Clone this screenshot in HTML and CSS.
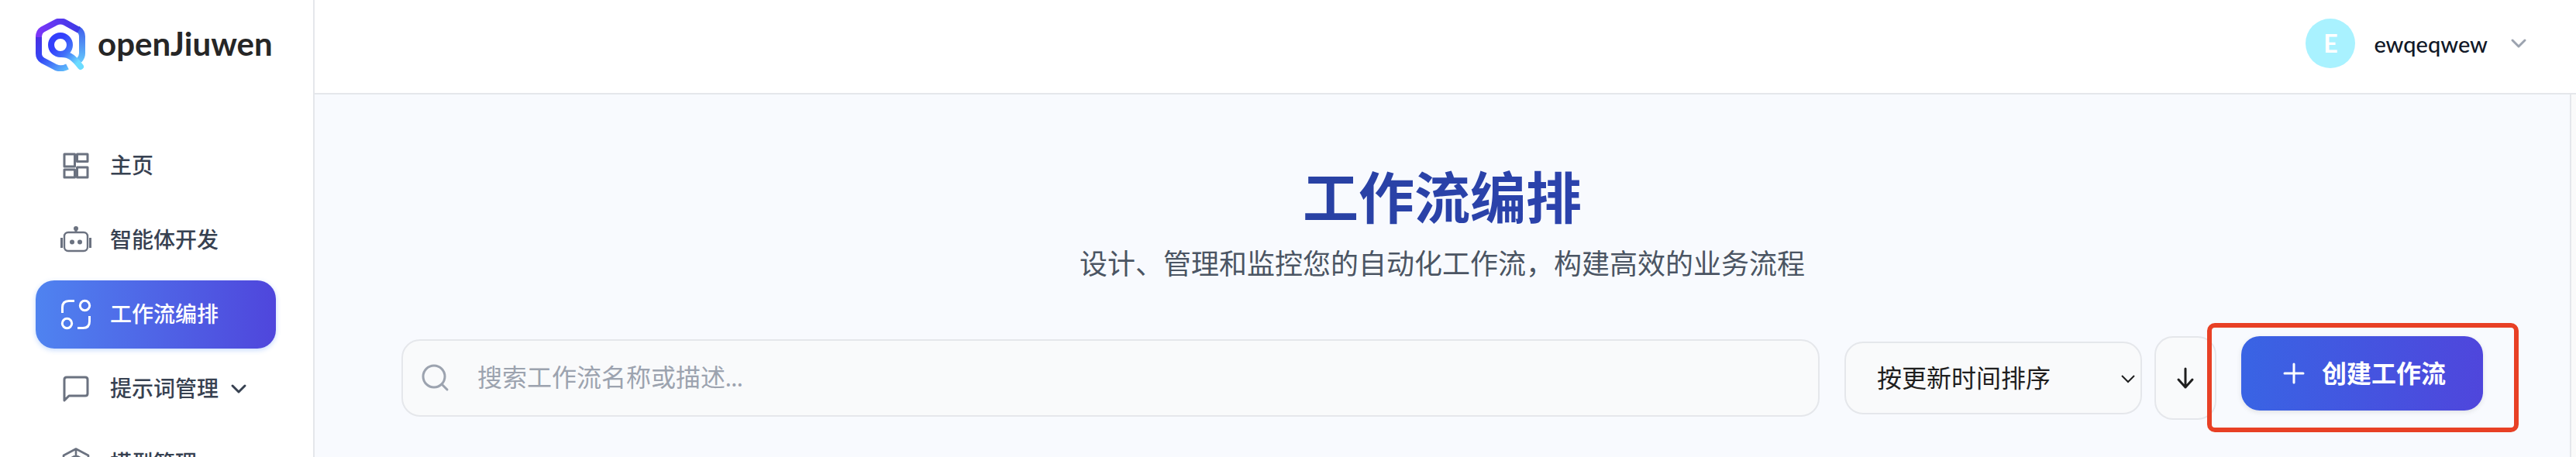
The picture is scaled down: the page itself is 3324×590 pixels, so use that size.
FILE: index.html
```html
<!DOCTYPE html>
<html lang="zh-CN">
<head>
  <meta charset="UTF-8" />
  <meta name="viewport" content="width=device-width, initial-scale=1.0"/>
  <title>工作流编排 - openJiuwen</title>
  <link rel="stylesheet" href="styles.css">
</head>
<body>
  <aside class="sidebar">
    <a class="brand" href="#">
      <svg class="brand-logo" viewBox="0 0 64 68" fill="none" stroke-width="8">
        <defs>
          <linearGradient id="logoTop" x1="4" y1="20" x2="56" y2="10" gradientUnits="userSpaceOnUse">
            <stop offset="0" stop-color="#7b35f8"/><stop offset="1" stop-color="#3c3ae6"/>
          </linearGradient>
          <linearGradient id="logoLeft" x1="4" y1="22" x2="40" y2="66" gradientUnits="userSpaceOnUse">
            <stop offset="0" stop-color="#4a2fe2"/><stop offset="0.45" stop-color="#3348f6"/><stop offset="1" stop-color="#5fbcfb"/>
          </linearGradient>
          <linearGradient id="logoRight" x1="58" y1="12" x2="60" y2="54" gradientUnits="userSpaceOnUse">
            <stop offset="0" stop-color="#3f5fec"/><stop offset="1" stop-color="#62c2fb"/>
          </linearGradient>
          <linearGradient id="logoTail" x1="26" y1="34" x2="58" y2="62" gradientUnits="userSpaceOnUse">
            <stop offset="0" stop-color="#333ffc"/><stop offset="0.4" stop-color="#4272f8"/><stop offset="0.85" stop-color="#6bdcff"/>
          </linearGradient>
        </defs>
        <path stroke="url(#logoLeft)" d="M4 22V45Q4 51 9 54L26 63Q33 66 41 62"/>
        <path stroke="url(#logoRight)" d="M54 13Q60 17 60 23V45Q60 50 56 54"/>
        <path stroke="url(#logoTop)" d="M4 24Q4 17 9 14L26 5Q32 2 38 5L56 15"/>
        <circle cx="32" cy="34" r="12" stroke="url(#logoTail)"/>
        <path stroke="url(#logoTail)" stroke-linecap="round" d="M33 46C45 46 50 52 58 62"/>
      </svg>
      <span class="brand-name">openJiuwen</span>
    </a>

    <nav class="menu">
      <a class="menu-item" href="#">
        <svg class="menu-icon" viewBox="0 0 40 40" fill="none" stroke="currentColor" stroke-width="3" stroke-linejoin="round">
          <path d="M5 5H18.500V21H5zM21.500 5H35V14.500H21.500zM5 25H18.500V35H5zM21.500 22H35V35H21.500z"/>
        </svg>
        <span class="menu-text">主页</span>
      </a>
      <a class="menu-item" href="#">
        <svg class="menu-icon" viewBox="0 0 40 40" fill="none" stroke="currentColor" stroke-width="2.400">
          <rect x="5" y="10" width="30" height="24" rx="5"/>
          <path d="M20 5V10M1.500 17V30M38.500 17V30" stroke-width="3"/>
          <g fill="currentColor" stroke="none">
            <circle cx="20" cy="5" r="3"/><circle cx="15" cy="22.500" r="3"/><circle cx="25" cy="22.500" r="3"/>
          </g>
        </svg>
        <span class="menu-text">智能体开发</span>
      </a>
      <a class="menu-item active" href="#">
        <svg class="menu-icon" viewBox="0 0 40 40" fill="none" stroke="currentColor" stroke-width="3">
          <path d="M2.500 18V11Q2.500 2.500 11 2.500H18M22 37.500H29Q37.500 37.500 37.500 29V22"/>
          <circle cx="31.500" cy="8.500" r="6.200"/><circle cx="8.500" cy="31.500" r="6.200"/>
        </svg>
        <span class="menu-text">工作流编排</span>
      </a>
      <button class="menu-item" type="button">
        <svg class="menu-icon" viewBox="0 0 40 40" fill="none" stroke="currentColor" stroke-width="3" stroke-linejoin="round">
          <path d="M5 35V8Q5 5 8 5H32Q35 5 35 8V26Q35 29 32 29H11Z"/>
        </svg>
        <span class="menu-text">提示词管理</span>
        <svg class="menu-arrow" viewBox="0 0 24 24" fill="none" stroke="currentColor" stroke-width="3" stroke-linecap="round" stroke-linejoin="round">
          <path d="M4 8L12 16L20 8"/>
        </svg>
      </button>
      <a class="menu-item" href="#">
        <svg class="menu-icon" viewBox="0 0 40 40" fill="none" stroke="currentColor" stroke-width="2.600" stroke-linejoin="round">
          <path d="M20 1.500L36 10V30L20 38.500L4 30V10Z"/>
          <path d="M20 2V10M20 10L29 15V25L20 30L11 25V15ZM11 15L20 20L29 15M20 20V30M4 30L11 25M36 30L29 25"/>
        </svg>
        <span class="menu-text">模型管理</span>
      </a>
    </nav>
  </aside>

  <div class="page">
    <header class="topbar">
      <button class="user" type="button">
        <span class="avatar">E</span>
        <span class="user-name">ewqeqwew</span>
        <svg class="user-arrow" viewBox="0 0 32 32" fill="none" stroke="currentColor" stroke-width="3" stroke-linecap="round" stroke-linejoin="round">
          <path d="M8 12L16 20L24 12"/>
        </svg>
      </button>
    </header>

    <main class="content">
      <h1 class="title">工作流编排</h1>
      <p class="subtitle">设计、管理和监控您的自动化工作流，构建高效的业务流程</p>

      <div class="toolbar">
        <label class="search">
          <svg class="search-icon" viewBox="0 0 40 40" fill="none" stroke="currentColor" stroke-width="3" stroke-linecap="round">
            <circle cx="18" cy="18" r="14"/><path d="M28 28L35 35"/>
          </svg>
          <input class="search-input" type="text" placeholder="搜索工作流名称或描述..." aria-label="搜索工作流">
        </label>
        <div class="sort">
          <select class="sort-select" aria-label="排序方式">
            <option>按更新时间排序</option>
          </select>
          <svg class="sort-arrow" viewBox="0 0 20 20" fill="none" stroke="currentColor" stroke-width="2">
            <path d="M2 6L10 14L18 6"/>
          </svg>
        </div>
        <button class="order" type="button" aria-label="降序">
          <svg class="order-icon" viewBox="0 0 32 32" fill="none" stroke="currentColor" stroke-width="3" stroke-linecap="round" stroke-linejoin="round">
            <path d="M16 4V28M7 18L16 28L25 18"/>
          </svg>
        </button>
        <div class="create">
          <button class="create-btn" type="button">
            <svg class="create-icon" viewBox="0 0 32 32" fill="none" stroke="currentColor" stroke-width="3" stroke-linecap="round">
              <path d="M16 4V28M4 16H28"/>
            </svg>
            <span class="create-text">创建工作流</span>
          </button>
          <div class="highlight"></div>
        </div>
      </div>
    </main>
  </div>
</body>
</html>
```

FILE: styles.css
```css
* { margin: 0; padding: 0; box-sizing: border-box; }

body {
  display: flex;
  height: 100vh;
  overflow: hidden;
  background: #fff;
  color: #1f1f1f;
  font-family: 'Noto Sans CJK SC', sans-serif;
}

a { color: inherit; text-decoration: none; }

button, input, select { font: inherit; color: inherit; border: none; background: none; outline: none; }

button { cursor: pointer; }

svg { display: block; flex-shrink: 0; }

/* sidebar */
.sidebar {
  flex: 0 0 406px;
  padding: 24px 48px 0 46px;
  border-right: 2px solid #e5e7eb;
  overflow: hidden;
}

.brand {
  display: flex;
  align-items: center;
  gap: 16px;
  height: 68px;
}

.brand-logo { width: 64px; height: 68px; }

.brand-name {
  padding-bottom: 4px;
  color: #262626;
  font-family: Lato, sans-serif;
  font-size: 42px;
  font-weight: 700;
}

.menu {
  display: flex;
  flex-direction: column;
  gap: 8px;
  margin-top: 78px;
}

.menu-item {
  display: flex;
  flex-shrink: 0;
  align-items: center;
  height: 88px;
  padding: 0 32px;
  border-radius: 24px;
  color: #374151;
  font-size: 28px;
  font-weight: 500;
}

.menu-icon {
  width: 40px;
  height: 40px;
  margin-right: 24px;
  color: #6b7280;
}

.menu-text, .create-text { padding-bottom: 4px; }

.menu-arrow { width: 24px; height: 24px; margin-left: 14px; }

.menu-item.active {
  background: linear-gradient(90deg, #4f83f0, #4f46dc);
  box-shadow: 0 2px 6px rgba(59, 130, 246, 0.3);
  color: #fff;
}

.menu-item.active .menu-icon { color: #fff; }

/* right side */
.page {
  display: flex;
  flex: 1;
  flex-direction: column;
  min-width: 0;
}

.topbar {
  display: flex;
  flex-shrink: 0;
  justify-content: flex-end;
  height: 122px;
  padding: 24px 58px 32px;
  border-bottom: 2px solid #e5e7eb;
}

.user { display: flex; align-items: center; }

.avatar {
  width: 64px;
  height: 64px;
  border-radius: 50%;
  background: #a9f2ff;
  color: #fff;
  font-family: Lato, sans-serif;
  font-size: 32px;
  font-weight: 700;
  line-height: 64px;
}

.user-name {
  margin: 0 24px;
  color: #111827;
  font-family: Lato, sans-serif;
  font-size: 29px;
  font-weight: 500;
}

.user-arrow { width: 32px; height: 32px; color: #9ca3af; }

.content {
  flex: 1;
  margin-right: 6px;
  padding: 84px 112px 0;
  border-right: 2px solid #e5e7eb;
  background: #f8fafe;
  box-shadow: 6px 0 0 #fafafa;
  text-align: center;
}

.title {
  background: linear-gradient(90deg, #1f3a86, #2a42a8 50%, #3344c8);
  background-clip: text;
  color: transparent;
  font-size: 72px;
  font-weight: 700;
  line-height: 90px;
}

.subtitle {
  margin-top: 14px;
  color: #4b5563;
  font-size: 36px;
  line-height: 56px;
}

/* toolbar */
.toolbar {
  display: flex;
  align-items: center;
  margin-top: 68px;
  font-size: 32px;
}

.search {
  display: flex;
  flex: 1;
  align-items: center;
  height: 100px;
  padding: 0 22px;
  border: 2px solid #e5e7eb;
  border-radius: 24px;
  background: #f9fafb;
}

.search-icon { width: 40px; height: 40px; color: #9ca3af; }

.search-input {
  flex: 1;
  height: 100%;
  margin-left: 34px;
  padding-bottom: 4px;
  font-family: Lato, 'Noto Sans CJK SC', sans-serif;
}

.search-input::placeholder { color: #9ca3af; }

.sort { position: relative; margin: 0 16px 0 32px; }

.sort-select {
  appearance: none;
  width: 384px;
  height: 94px;
  padding: 0 40px 4px;
  border: 2px solid #e5e7eb;
  border-radius: 24px;
  background: #f9fafb;
}

.sort-arrow {
  position: absolute;
  top: 38px;
  right: 8px;
  width: 20px;
  height: 20px;
  pointer-events: none;
}

.order {
  display: flex;
  align-items: center;
  justify-content: center;
  width: 80px;
  height: 108px;
  border: 2px solid #e5e7eb;
  border-radius: 24px;
  background: #f9fafb;
}

.order-icon { width: 32px; height: 32px; }

.create {
  position: relative;
  align-self: flex-start;
  margin-left: 32px;
}

.create-btn {
  display: flex;
  align-items: center;
  gap: 20px;
  height: 96px;
  padding: 0 48px 0 52px;
  border-radius: 24px;
  background: linear-gradient(90deg, #3964e4, #4f46dc);
  box-shadow: 0 2px 6px rgba(0, 0, 0, 0.1);
  color: #fff;
  font-weight: 700;
}

.create-icon { width: 32px; height: 32px; }

/* red frame around the create button */
.highlight {
  position: absolute;
  inset: -17px -46px -28px -44px;
  border: 6px solid #e84025;
  border-radius: 10px;
  pointer-events: none;
}
```
